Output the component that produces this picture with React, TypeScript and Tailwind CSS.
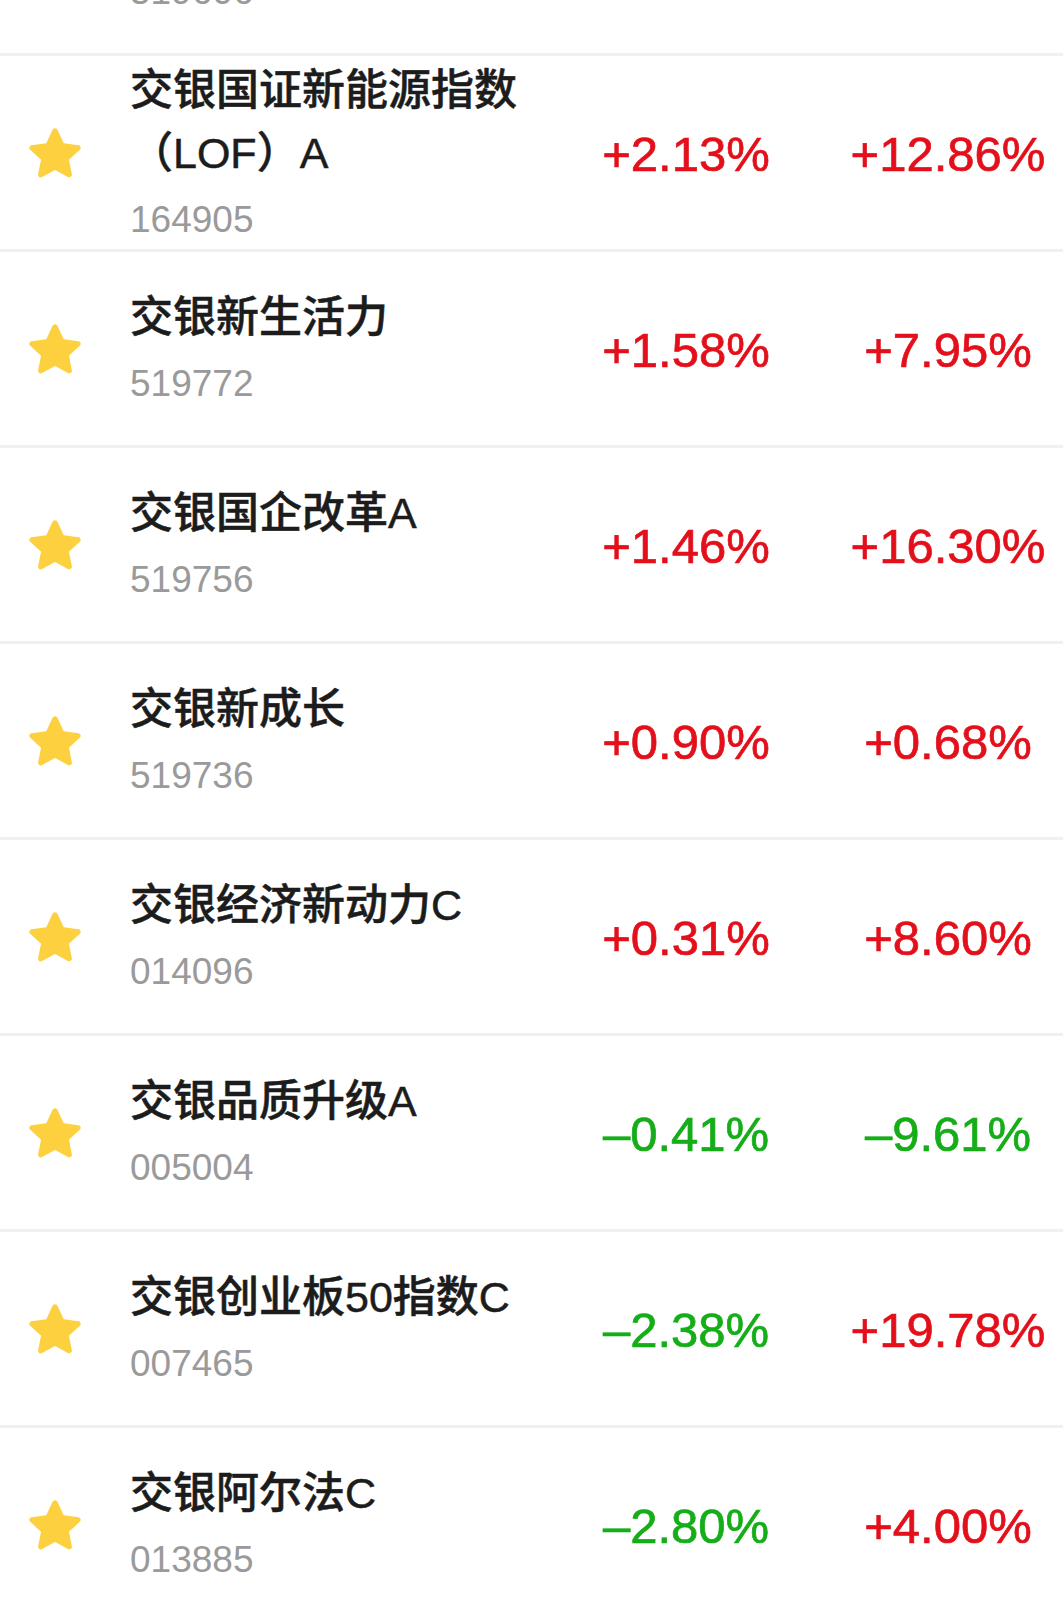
import React from 'react';

interface Fund {
    name: string;
    code: string;
    day: string;
    month: string;
}

const FUNDS: Fund[] = [
    { name: '交银优势行业', code: '519606', day: '+0.52%', month: '+3.10%' },
    { name: '交银国证新能源指数（LOF）A', code: '164905', day: '+2.13%', month: '+12.86%' },
    { name: '交银新生活力', code: '519772', day: '+1.58%', month: '+7.95%' },
    { name: '交银国企改革A', code: '519756', day: '+1.46%', month: '+16.30%' },
    { name: '交银新成长', code: '519736', day: '+0.90%', month: '+0.68%' },
    { name: '交银经济新动力C', code: '014096', day: '+0.31%', month: '+8.60%' },
    { name: '交银品质升级A', code: '005004', day: '–0.41%', month: '–9.61%' },
    { name: '交银创业板50指数C', code: '007465', day: '–2.38%', month: '+19.78%' },
    { name: '交银阿尔法C', code: '013885', day: '–2.80%', month: '+4.00%' },
];

const Star: React.FC = () => (
    <svg viewBox="0 0 24 24" className="w-[54px] h-[54px]" aria-hidden="true">
        <polygon
            points="12,2.2 15.1,8.8 22.2,9.7 16.9,14.6 18.3,21.6 12,18.2 5.7,21.6 7.1,14.6 1.8,9.7 8.9,8.8"
            fill="#fdd03f"
            stroke="#fdd03f"
            strokeWidth="2.4"
            strokeLinejoin="round"
        />
    </svg>
);

// red for gains, green for losses
const pctColor = (v: string) => (v.startsWith('+') ? 'text-[#e3101b]' : 'text-[#15ad18]');

const FundRow: React.FC<{ fund: Fund }> = ({ fund }) => (
    <div className="flex items-center h-[196px] border-b-[3px] border-[#f0f0f0] bg-white">
        <div className="w-[130px] shrink-0 pl-[28px] flex items-center">
            <Star />
        </div>
        <div className="flex-1 min-w-0">
            <div className="text-[43px] leading-[63px] font-medium text-[#1c1c1c] [-webkit-text-stroke:0.5px]">
                {fund.name}
            </div>
            <div className="mt-[8px] text-[37px] leading-[54px] text-[#9a9a9a]">{fund.code}</div>
        </div>
        <div className={`w-[294px] shrink-0 pt-[4px] text-center text-[49px] [-webkit-text-stroke:0.7px] ${pctColor(fund.day)}`}>
            {fund.day}
        </div>
        <div className={`w-[230px] shrink-0 pt-[4px] text-center text-[49px] [-webkit-text-stroke:0.7px] ${pctColor(fund.month)}`}>
            {fund.month}
        </div>
    </div>
);

export default function App() {
    return (
        <div
            className="h-[1612px] w-[1063px] overflow-hidden bg-white"
            style={{ fontFamily: '"Liberation Sans", "Noto Sans CJK SC", sans-serif' }}
        >
            <div className="-mt-[140px]">
                {FUNDS.map(f => (
                    <FundRow key={f.code} fund={f} />
                ))}
            </div>
        </div>
    );
}
